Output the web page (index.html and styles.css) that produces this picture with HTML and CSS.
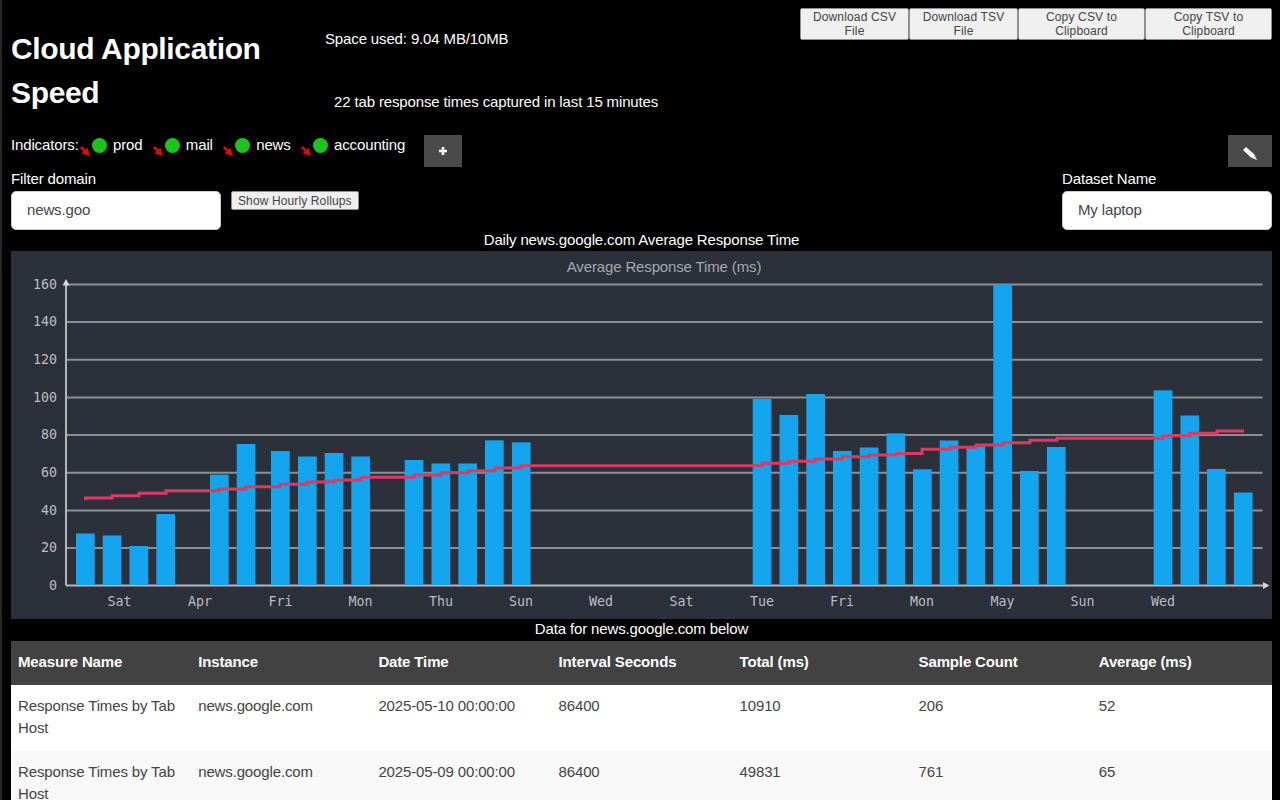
FILE: index.html
```html
<!DOCTYPE html>
<html lang="en">
<head>
<meta charset="utf-8">
<title>Cloud Application Speed</title>
<link rel="stylesheet" href="styles.css">
</head>
<body>
<header class="top">
  <h1 class="title">Cloud Application Speed</h1>
  <div class="stats">
    <p class="space">Space used: 9.04 MB/10MB</p>
    <p class="captured">22 tab response times captured in last 15 minutes</p>
  </div>
  <div class="exports">
    <button class="export w1">Download CSV File</button>
    <button class="export w1">Download TSV File</button>
    <button class="export w3">Copy CSV to Clipboard</button>
    <button class="export w3">Copy TSV to Clipboard</button>
  </div>
</header>

<section class="indicators">
  <span class="ind-label">Indicators:</span>
  <span class="ind">
    <svg class="arrow" viewBox="0 0 10 10"><path d="M0 2L2 0L5.5 3.5L7.5 1.5L10 10L1.5 7.5L3.5 5.5Z"/></svg>
    <i class="dot"></i><span class="ind-name">prod</span>
  </span>
  <span class="ind">
    <svg class="arrow" viewBox="0 0 10 10"><path d="M0 2L2 0L5.5 3.5L7.5 1.5L10 10L1.5 7.5L3.5 5.5Z"/></svg>
    <i class="dot"></i><span class="ind-name">mail</span>
  </span>
  <span class="ind">
    <svg class="arrow" viewBox="0 0 10 10"><path d="M0 2L2 0L5.5 3.5L7.5 1.5L10 10L1.5 7.5L3.5 5.5Z"/></svg>
    <i class="dot"></i><span class="ind-name">news</span>
  </span>
  <span class="ind">
    <svg class="arrow" viewBox="0 0 10 10"><path d="M0 2L2 0L5.5 3.5L7.5 1.5L10 10L1.5 7.5L3.5 5.5Z"/></svg>
    <i class="dot"></i><span class="ind-name">accounting</span>
  </span>
  <button class="dark add" aria-label="Add">
    <svg viewBox="0 0 10 10" class="plus"><path d="M5 1V9M1 5H9"/></svg>
  </button>
  <button class="dark edit" aria-label="Edit">
    <svg viewBox="0 0 14 13" class="pencil"><path d="M0 3L3 0L11 7L14 13L8 10.5Z"/></svg>
  </button>
</section>

<section class="filters">
  <div class="field">
    <label class="field-label">Filter domain</label>
    <input class="field-input" type="text" value="news.goo">
  </div>
  <button class="rollups">Show Hourly Rollups</button>
  <div class="field dataset">
    <label class="field-label">Dataset Name</label>
    <input class="field-input" type="text" value="My laptop">
  </div>
</section>

<h2 class="caption chart-caption">Daily news.google.com Average Response Time</h2>

<div class="chart">
  <svg class="chart-svg" viewBox="11 251 1261 368" width="1261" height="368">
    <text class="chart-title" x="664" y="272" text-anchor="middle">Average Response Time (ms)</text>
    <g class="grid">
      <path d="M66 284.5H1262.5"/><path d="M66 322H1262.5"/><path d="M66 359.7H1262.5"/>
      <path d="M66 397.4H1262.5"/><path d="M66 435H1262.5"/><path d="M66 472.8H1262.5"/>
      <path d="M66 510.4H1262.5"/><path d="M66 548H1262.5"/>
    </g>
    <g class="axis">
      <path d="M66 585.5V284"/><path d="M66 585.5H1265"/>
    </g>
    <path class="axis-head" d="M66 279L69.5 285.5H62.5Z"/>
    <path class="axis-head" d="M1269.5 585.5L1263 582V589Z"/>
    <g class="ylabels" text-anchor="end">
      <text x="57" y="288.5">160</text><text x="57" y="326">140</text><text x="57" y="364">120</text>
      <text x="57" y="401.5">100</text><text x="57" y="439">80</text><text x="57" y="477">60</text>
      <text x="57" y="514.5">40</text><text x="57" y="552">20</text><text x="57" y="589.5">0</text>
    </g>
    <g class="xlabels" text-anchor="middle">
      <text x="119.5" y="606">Sat</text><text x="200" y="606">Apr</text><text x="280.5" y="606">Fri</text>
      <text x="360.5" y="606">Mon</text><text x="441" y="606">Thu</text><text x="521" y="606">Sun</text>
      <text x="601" y="606">Wed</text><text x="681.5" y="606">Sat</text><text x="762" y="606">Tue</text>
      <text x="842" y="606">Fri</text><text x="922" y="606">Mon</text><text x="1002.5" y="606">May</text>
      <text x="1082.5" y="606">Sun</text><text x="1163" y="606">Wed</text>
    </g>
    <g class="bars">
      <rect x="76" y="533.5" width="18.7" height="51.5"/>
      <rect x="102.7" y="535.5" width="18.7" height="49.5"/>
      <rect x="129.5" y="546" width="18.7" height="39"/>
      <rect x="156.3" y="514" width="18.7" height="71"/>
      <rect x="210" y="474.7" width="18.7" height="110.3"/>
      <rect x="236.7" y="444" width="18.7" height="141"/>
      <rect x="271" y="451" width="18.7" height="134"/>
      <rect x="298" y="456.5" width="18.7" height="128.5"/>
      <rect x="324.7" y="453" width="18.7" height="132"/>
      <rect x="351.3" y="456.5" width="18.7" height="128.5"/>
      <rect x="404.7" y="460" width="18.7" height="125"/>
      <rect x="431.5" y="463.5" width="18.7" height="121.5"/>
      <rect x="458.3" y="463.5" width="18.7" height="121.5"/>
      <rect x="485" y="440.3" width="18.7" height="144.7"/>
      <rect x="511.9" y="442.3" width="18.7" height="142.7"/>
      <rect x="752.7" y="399" width="18.7" height="186"/>
      <rect x="779.5" y="415" width="18.7" height="170"/>
      <rect x="806.3" y="394" width="18.7" height="191"/>
      <rect x="833" y="451" width="18.7" height="134"/>
      <rect x="859.7" y="447.5" width="18.7" height="137.5"/>
      <rect x="886.5" y="433.3" width="18.7" height="151.7"/>
      <rect x="913" y="469.3" width="18.7" height="115.7"/>
      <rect x="939.7" y="440.5" width="18.7" height="144.5"/>
      <rect x="966.5" y="446.5" width="18.7" height="138.5"/>
      <rect x="993.3" y="284.5" width="18.7" height="300.5"/>
      <rect x="1020" y="471" width="18.7" height="114"/>
      <rect x="1046.9" y="447" width="18.7" height="138"/>
      <rect x="1153.7" y="390.3" width="18.7" height="194.7"/>
      <rect x="1180.4" y="415.5" width="18.7" height="169.5"/>
      <rect x="1207" y="469" width="18.7" height="116"/>
      <rect x="1233.9" y="492.5" width="18.7" height="92.5"/>
    </g>
    <path class="trend" d="M85.5 500V498H112V495.7H139V493.3H166V490.7H219V489H246V486.7H280V484.3H307V482H334V480H361V477.3H414V475H441V472.7H468V470.7H495V468H521V465.7H762V463.3H789V461.3H815V459H842V456.7H869V455H896V453.4H922V449.3H950V447.3H976V445H1003V442.7H1030V440.3H1057V438.3H1163V435.7H1190V433.3H1217V431H1244"/>
  </svg>
</div>

<h2 class="caption table-caption">Data for news.google.com below</h2>

<table class="data">
  <thead>
    <tr><th>Measure Name</th><th>Instance</th><th>Date Time</th><th>Interval Seconds</th><th>Total (ms)</th><th>Sample Count</th><th>Average (ms)</th></tr>
  </thead>
  <tbody>
    <tr><td>Response Times by Tab Host</td><td>news.google.com</td><td>2025-05-10 00:00:00</td><td>86400</td><td>10910</td><td>206</td><td>52</td></tr>
    <tr><td>Response Times by Tab Host</td><td>news.google.com</td><td>2025-05-09 00:00:00</td><td>86400</td><td>49831</td><td>761</td><td>65</td></tr>
  </tbody>
</table>
</body>
</html>
```

FILE: styles.css
```css
html {
  background: #000;
  overflow: hidden;
  height: 800px;
}

body {
  margin: 0;
  padding: 0 8px 0 9px;
  border-left: 2px solid #262626;
  height: 800px;
  overflow: hidden;
  background: #000;
  color: #fff;
  font-family: "Liberation Sans", Arial, sans-serif;
  font-size: 15px;
  letter-spacing: -0.14px;
}

button,
input {
  font-family: inherit;
  letter-spacing: inherit;
}

.top {
  display: flex;
  height: 126px;
}

.title {
  width: 314px;
  flex: none;
  margin: 0;
  padding-top: 27px;
  font-size: 30px;
  line-height: 44px;
  font-weight: 700;
  letter-spacing: -0.35px;
}

.stats {
  flex: none;
  width: 333px;
  display: flex;
  flex-direction: column;
}

.stats p {
  margin: 0;
  line-height: 18px;
  white-space: nowrap;
}

.space {
  padding-top: 30px;
  margin-left: -0.5px;
}

.captured {
  padding: 45px 0 0 9px;
}

.exports {
  margin-left: auto;
  display: flex;
  align-items: flex-start;
  padding-top: 8px;
}

.export {
  height: 32px;
  padding: 0 6px;
  background: #efefef;
  border: 1px solid #8f8f8f;
  border-radius: 2px;
  color: #444;
  font-size: 12px;
  line-height: 14px;
  letter-spacing: 0.15px;
}

.w1 { width: 109px; }
.w3 { width: 127px; }

.indicators {
  display: flex;
  align-items: flex-start;
  height: 32px;
  padding-top: 9px;
}

.ind-label {
  line-height: 20px;
  width: 69px;
}

.ind {
  display: flex;
  align-items: flex-start;
  margin-right: 10.4px;
}

.ind-name {
  line-height: 20px;
  margin-left: 6px;
}

.arrow {
  width: 10px;
  height: 10px;
  margin-top: 11px;
  fill: #d30f0f;
  stroke: #7a0606;
  stroke-width: 0.3;
}

.dot {
  width: 15px;
  height: 15px;
  margin: 3px 0 0 2px;
  border-radius: 50%;
  background: #1bc41b;
}

.dark {
  display: flex;
  align-items: center;
  justify-content: center;
  height: 32px;
  padding: 0;
  border: 0;
  background: #4a4a4a;
}

.add {
  width: 38px;
  margin-left: 8px;
}

.edit {
  width: 44px;
  margin-left: auto;
}

.plus {
  width: 10px;
  height: 10px;
  stroke: #fff;
  stroke-width: 2.6;
  fill: none;
}

.pencil {
  width: 14px;
  height: 13px;
  margin-top: 4px;
  fill: #fff;
}

.filters {
  display: flex;
  align-items: flex-start;
  height: 63px;
}

.field {
  display: flex;
  flex-direction: column;
  width: 210px;
}

.field-label {
  line-height: 20px;
  height: 22px;
  margin-top: 2px;
}

.field-input {
  box-sizing: border-box;
  width: 210px;
  height: 39px;
  padding: 0 15px 2px;
  border: 1px solid #ccc;
  border-radius: 5px;
  background: #fff;
  color: #444;
  font-size: 15px;
}

.rollups {
  height: 19px;
  margin: 24px 0 0 10px;
  padding: 0 6px;
  background: #efefef;
  border: 1px solid #8f8f8f;
  border-radius: 2px;
  color: #444;
  font-size: 12px;
  letter-spacing: 0.12px;
}

.dataset {
  margin-left: auto;
}

.caption {
  margin: 0;
  text-align: center;
  font-size: 15px;
  font-weight: 400;
  line-height: 20px;
}

.chart-caption {
  height: 21px;
}

.chart {
  height: 368px;
  background: #2c303a;
}

.chart-svg {
  display: block;
}

.chart-title {
  fill: #a5a8b0;
  font-size: 15px;
}

.grid path {
  stroke: #8d8f96;
  stroke-width: 2;
  fill: none;
}

.axis path {
  stroke: #b5b6ba;
  stroke-width: 2;
  fill: none;
}

.axis-head {
  fill: #d6d7da;
}

.ylabels text,
.xlabels text {
  fill: #bcbec4;
  font-family: "DejaVu Sans Mono", monospace;
  font-size: 13.3px;
  letter-spacing: 0;
}

.bars rect {
  fill: #14a5ef;
}

.trend {
  fill: none;
  stroke: #dd3a62;
  stroke-width: 3;
}

.table-caption {
  height: 22px;
}

.data {
  width: 1261px;
  table-layout: fixed;
  border-collapse: collapse;
  color: #444;
}

.data th {
  height: 44px;
  box-sizing: border-box;
  padding: 0 7px 3px;
  background: #424242;
  color: #fff;
  font-weight: 700;
  text-align: left;
}

.data th:nth-child(4) { width: 181px; }
.data th:nth-child(5) { width: 179px; }

.data td {
  height: 66px;
  box-sizing: border-box;
  padding: 10px 7px;
  vertical-align: top;
  line-height: 22px;
  background: #fff;
}

.data tbody tr:nth-child(2) td {
  background: #f8f8f8;
}
```
